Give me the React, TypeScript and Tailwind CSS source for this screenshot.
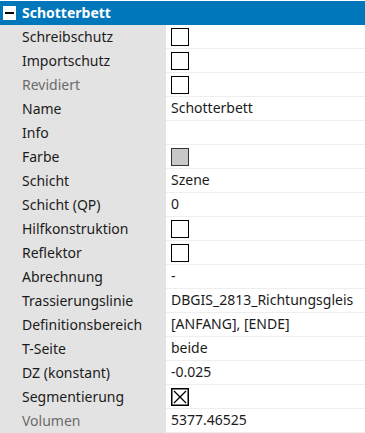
import React from "react"

type Row = {
  label: string
  value?: string
  kind?: "check" | "checked" | "color"
  muted?: boolean
}

const rows: Row[] = [
  { label: "Schreibschutz", kind: "check" },
  { label: "Importschutz", kind: "check" },
  { label: "Revidiert", kind: "check", muted: true },
  { label: "Name", value: "Schotterbett" },
  { label: "Info", value: "" },
  { label: "Farbe", kind: "color" },
  { label: "Schicht", value: "Szene" },
  { label: "Schicht (QP)", value: "0" },
  { label: "Hilfkonstruktion", kind: "check" },
  { label: "Reflektor", kind: "check" },
  { label: "Abrechnung", value: "-" },
  { label: "Trassierungslinie", value: "DBGIS_2813_Richtungsgleis" },
  { label: "Definitionsbereich", value: "[ANFANG], [ENDE]" },
  { label: "T-Seite", value: "beide" },
  { label: "DZ (konstant)", value: "-0.025" },
  { label: "Segmentierung", kind: "checked" },
  { label: "Volumen", value: "5377.46525", muted: true },
]

function Cell({ row }: { row: Row }) {
  if (row.kind === "check") {
    return <span className="block h-[18px] w-[18px] border-[1.5px] border-black bg-white" />
  }
  if (row.kind === "checked") {
    return (
      <svg width="18" height="18" viewBox="0 0 18 18" className="block">
        <rect x="0.75" y="0.75" width="16.5" height="16.5" fill="white" stroke="black" strokeWidth="1.5" />
        <path d="M3 3 L15 15 M15 3 L3 15" stroke="black" strokeWidth="1.3" />
      </svg>
    )
  }
  if (row.kind === "color") {
    return <span className="block h-[18px] w-[18px] border border-[#333] bg-[#c8c8c8]" />
  }
  return <span className="-mt-[2px]">{row.value}</span>
}

export default function App() {
  return (
    <div className="h-[433px] w-[365px] overflow-hidden bg-white font-['Noto_Sans',sans-serif] text-[14px] text-[#1b1b1b]">
      <div className="mt-px flex h-6 items-center gap-[6px] bg-[#0177bb] pl-[3px]">
        <span className="flex h-[14px] w-[13px] items-center justify-center bg-white">
          <span className="h-[2px] w-[9px] bg-black" />
        </span>
        <span className="-mt-px text-[14px] font-bold leading-none text-white">Schotterbett</span>
      </div>
      {rows.map((r) => (
        <div key={r.label} className="flex h-6">
          <div className={`flex w-[166px] items-center bg-[#e3e3e3] pb-[2px] pl-[22px] ${r.muted ? "text-[#6b6b6b]" : ""}`}>
            {r.label}
          </div>
          <div className="flex flex-1 items-center border-b border-[#eeeeee] pl-[5px]">
            <Cell row={r} />
          </div>
        </div>
      ))}
    </div>
  )
}
